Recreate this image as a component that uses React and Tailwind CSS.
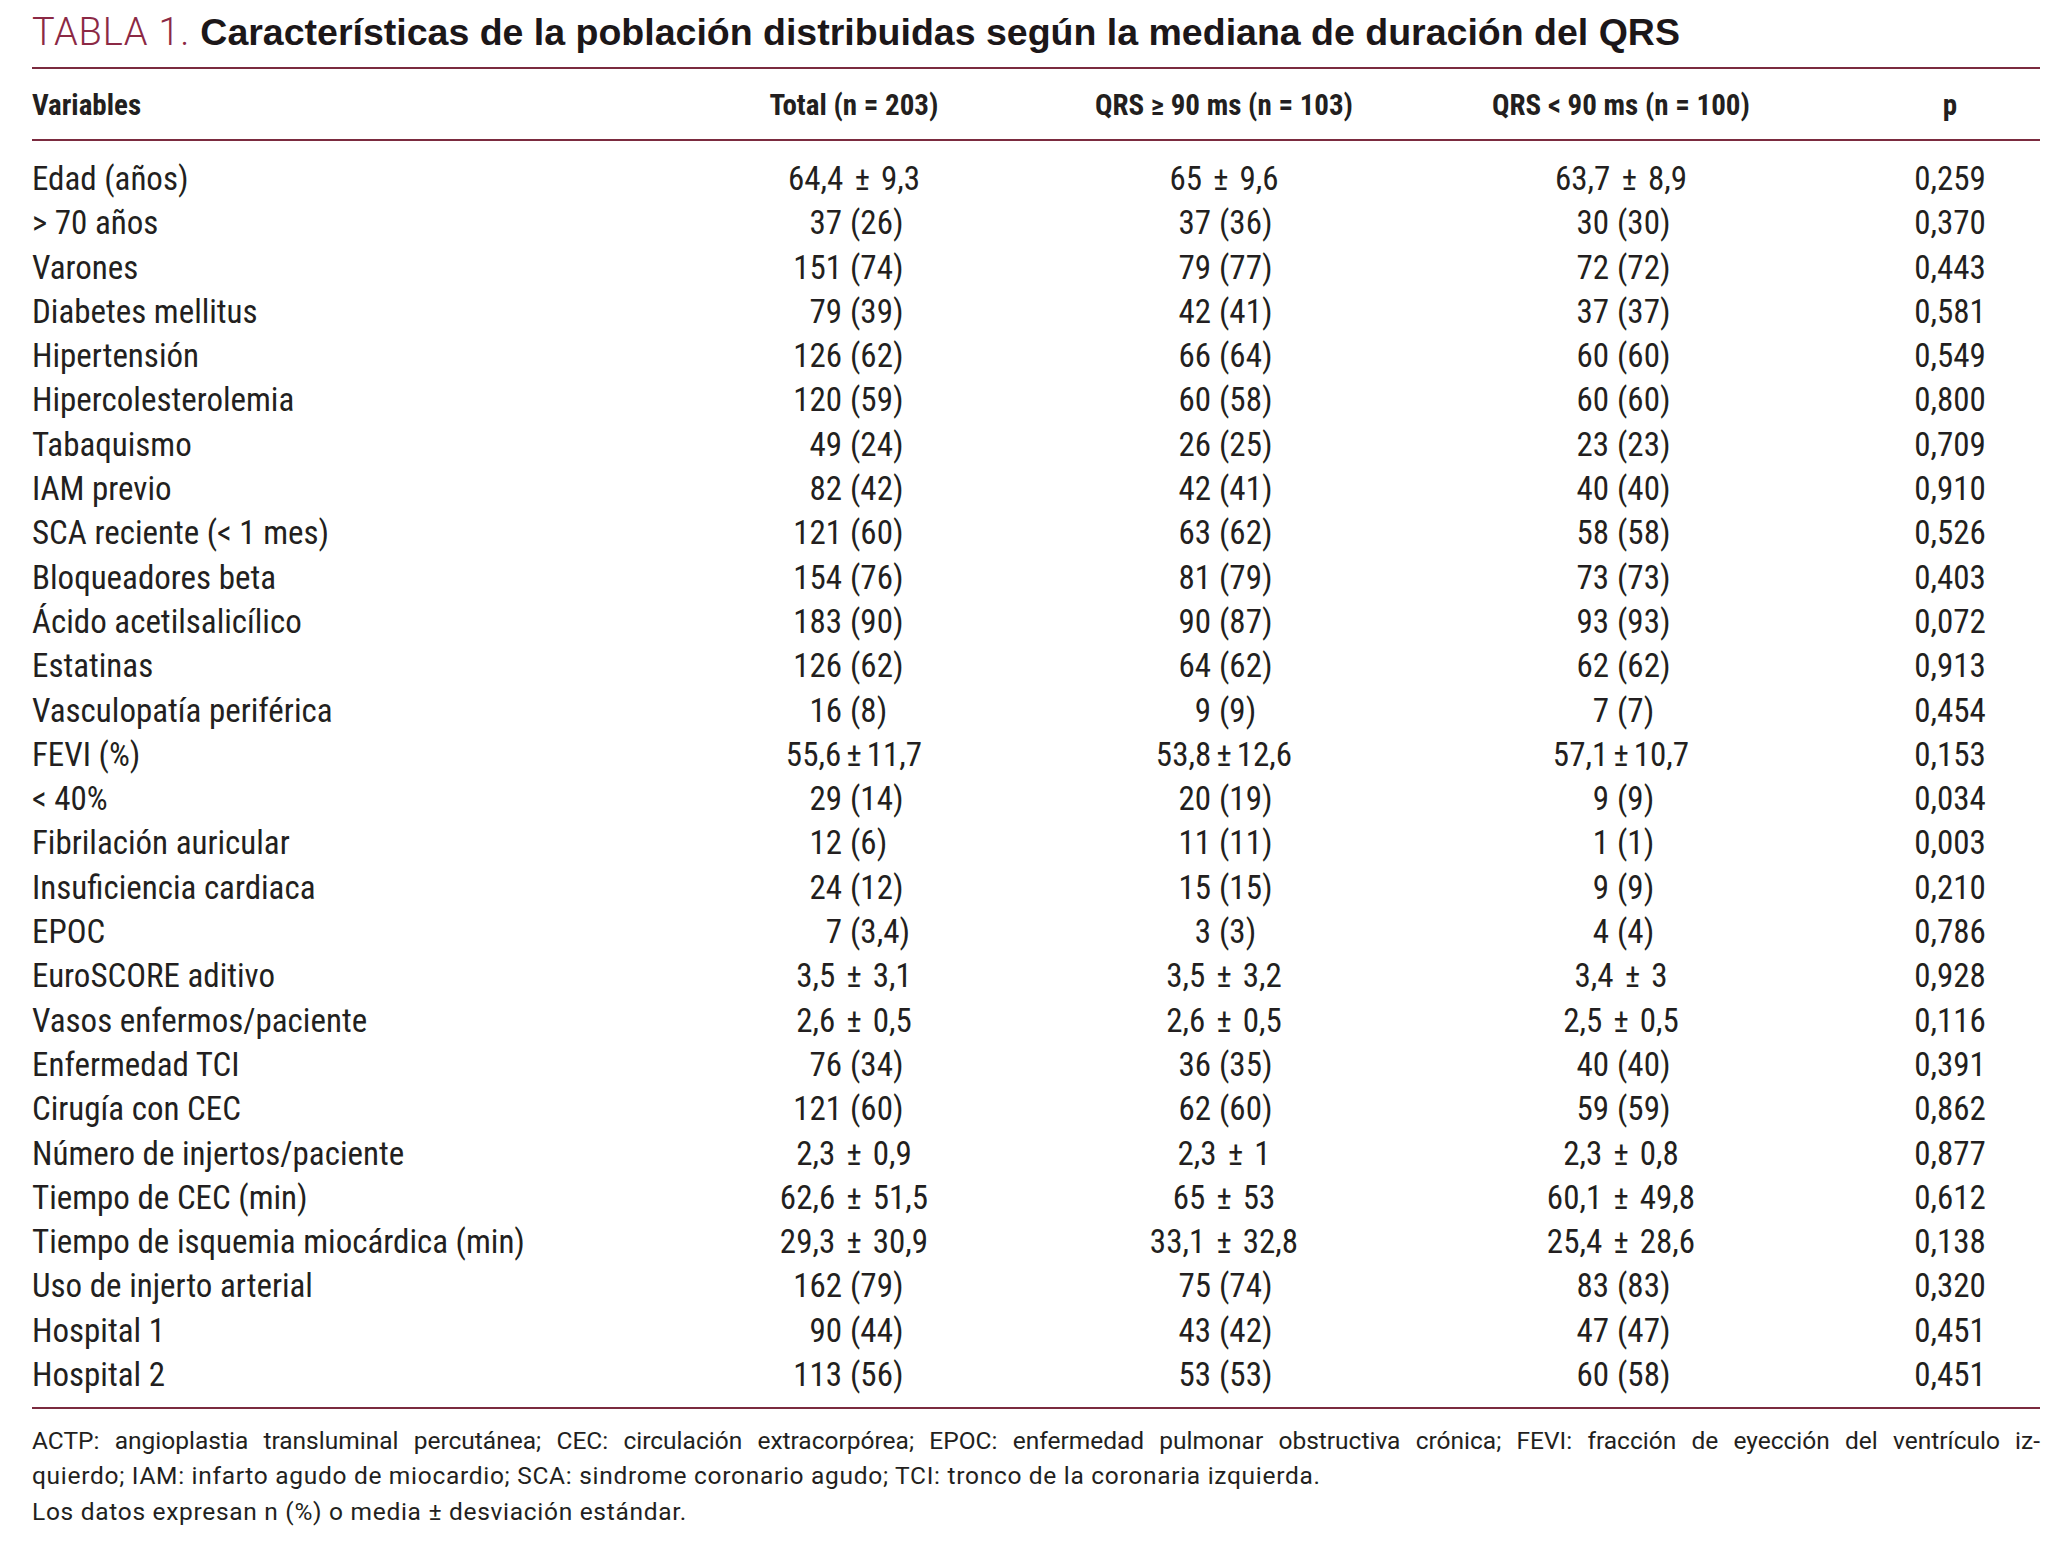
const rows = [
  ["Edad (años)", "64,4 ± 9,3", "65 ± 9,6", "63,7 ± 8,9", "0,259"],
  ["> 70 años", "37 (26)", "37 (36)", "30 (30)", "0,370"],
  ["Varones", "151 (74)", "79 (77)", "72 (72)", "0,443"],
  ["Diabetes mellitus", "79 (39)", "42 (41)", "37 (37)", "0,581"],
  ["Hipertensión", "126 (62)", "66 (64)", "60 (60)", "0,549"],
  ["Hipercolesterolemia", "120 (59)", "60 (58)", "60 (60)", "0,800"],
  ["Tabaquismo", "49 (24)", "26 (25)", "23 (23)", "0,709"],
  ["IAM previo", "82 (42)", "42 (41)", "40 (40)", "0,910"],
  ["SCA reciente (< 1 mes)", "121 (60)", "63 (62)", "58 (58)", "0,526"],
  ["Bloqueadores beta", "154 (76)", "81 (79)", "73 (73)", "0,403"],
  ["Ácido acetilsalicílico", "183 (90)", "90 (87)", "93 (93)", "0,072"],
  ["Estatinas", "126 (62)", "64 (62)", "62 (62)", "0,913"],
  ["Vasculopatía periférica", "16 (8)", "9 (9)", "7 (7)", "0,454"],
  ["FEVI (%)", "55,6±11,7", "53,8±12,6", "57,1±10,7", "0,153"],
  ["< 40%", "29 (14)", "20 (19)", "9 (9)", "0,034"],
  ["Fibrilación auricular", "12 (6)", "11 (11)", "1 (1)", "0,003"],
  ["Insuficiencia cardiaca", "24 (12)", "15 (15)", "9 (9)", "0,210"],
  ["EPOC", "7 (3,4)", "3 (3)", "4 (4)", "0,786"],
  ["EuroSCORE aditivo", "3,5 ± 3,1", "3,5 ± 3,2", "3,4 ± 3", "0,928"],
  ["Vasos enfermos/paciente", "2,6 ± 0,5", "2,6 ± 0,5", "2,5 ± 0,5", "0,116"],
  ["Enfermedad TCI", "76 (34)", "36 (35)", "40 (40)", "0,391"],
  ["Cirugía con CEC", "121 (60)", "62 (60)", "59 (59)", "0,862"],
  ["Número de injertos/paciente", "2,3 ± 0,9", "2,3 ± 1", "2,3 ± 0,8", "0,877"],
  ["Tiempo de CEC (min)", "62,6 ± 51,5", "65 ± 53", "60,1 ± 49,8", "0,612"],
  ["Tiempo de isquemia miocárdica (min)", "29,3 ± 30,9", "33,1 ± 32,8", "25,4 ± 28,6", "0,138"],
  ["Uso de injerto arterial", "162 (79)", "75 (74)", "83 (83)", "0,320"],
  ["Hospital 1", "90 (44)", "43 (42)", "47 (47)", "0,451"],
  ["Hospital 2", "113 (56)", "53 (53)", "60 (58)", "0,451"],
];

function Cell({ v, w }) {
  const i = v.indexOf(" (");
  if (i >= 0) {
    return (
      <div className="flex">
        <span className={`${w} shrink-0 text-right`}>{v.slice(0, i)}</span>
        <span className="pl-[8px] whitespace-pre">{v.slice(i + 1)}</span>
      </div>
    );
  }
  const spaced = v.includes(" ± ");
  const [a, b] = v.split(spaced ? " ± " : "±");
  return (
    <div className="flex justify-center whitespace-nowrap">
      <span>{a}</span>
      <span className={spaced ? "px-[11px]" : "px-[5px]"}>±</span>
      <span>{b}</span>
    </div>
  );
}

export default function App() {
  return (
    <div className="w-[2066px] min-h-[1558px] bg-white pl-[32px] pr-[26px] pt-[9px] text-[#231f20]">
      <div className="h-[46px] leading-[46px] whitespace-nowrap">
        <span className="font-['Roboto',sans-serif] text-[38px] font-light tracking-[0.8px] text-[#8c2945]">TABLA 1. </span>
        <span className="font-['Liberation_Sans',sans-serif] text-[37.5px] font-bold text-[#1c1719]">
          Características de la población distribuidas según la mediana de duración del QRS
        </span>
      </div>
      <div className="mt-[12px] h-[2px] bg-[#7b2b3f]" />

      <div className="font-['Roboto',sans-serif] font-stretch-condensed">
        <div className="grid h-[70px] grid-cols-[640px_364px_376px_418px_210px] items-center pt-[4px] text-[29px] font-bold whitespace-nowrap">
          <div>Variables</div>
          <div className="text-center">Total (n = 203)</div>
          <div className="text-center">QRS ≥ 90 ms (n = 103)</div>
          <div className="text-center">QRS &lt; 90 ms (n = 100)</div>
          <div className="pl-[30px] text-center">p</div>
        </div>
        <div className="h-[2px] bg-[#7b2b3f]" />

        <div className="pt-[16px] text-[33px]">
          {rows.map((r, idx) => (
            <div
              key={idx}
              className="grid h-[44.3px] grid-cols-[640px_364px_376px_418px_210px] items-center leading-[44.3px]"
            >
              <div className="whitespace-nowrap">{r[0]}</div>
              <Cell v={r[1]} w="w-[170px]" />
              <Cell v={r[2]} w="w-[175px]" />
              <Cell v={r[3]} w="w-[197px]" />
              <div className="pl-[30px] text-center">{r[4]}</div>
            </div>
          ))}
        </div>

        <div className="mt-[9.5px] h-[2px] bg-[#7b2b3f]" />

        <div className="pt-[14px] text-[24.5px] leading-[35.5px] tracking-[0.7px] font-stretch-normal">
          <div className="text-justify [text-align-last:justify] whitespace-nowrap tracking-normal">
            ACTP: angioplastia transluminal percutánea; CEC: circulación extracorpórea; EPOC: enfermedad pulmonar obstructiva crónica; FEVI: fracción de eyección del ventrículo iz-
          </div>
          <div>
            quierdo; IAM: infarto agudo de miocardio; SCA: sindrome coronario agudo; TCI: tronco de la coronaria izquierda.
          </div>
          <div>Los datos expresan n (%) o media ± desviación estándar.</div>
        </div>
      </div>
    </div>
  );
}
